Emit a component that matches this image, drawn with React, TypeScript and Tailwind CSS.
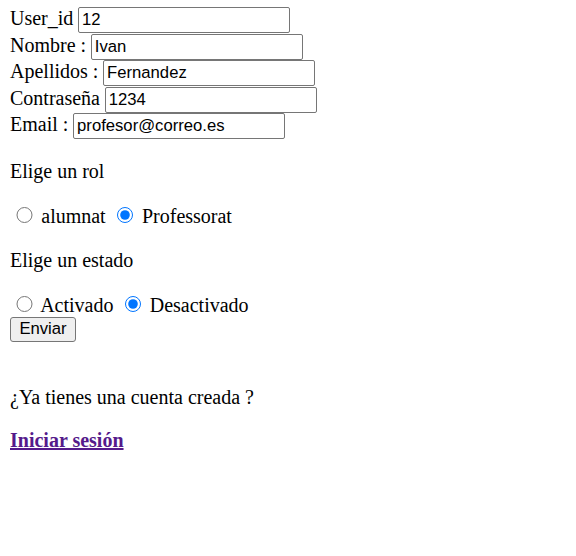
const fields = [
  { label: "User_id ", value: "12" },
  { label: "Nombre : ", value: "Ivan" },
  { label: "Apellidos : ", value: "Fernandez" },
  { label: "Contraseña ", value: "1234" },
  { label: "Email : ", value: "profesor@correo.es" },
];

const inputCls =
  "w-[212px] h-[26px] border border-[#767676] rounded-[2px] px-[2.75px] bg-white text-black text-[16.67px] font-['Liberation_Sans',Arial,sans-serif] outline-none";

const Radio = ({ name, checked }: { name: string; checked?: boolean }) => (
  <input
    type="radio"
    name={name}
    defaultChecked={checked}
    className="w-[16.25px] h-[16.25px] ml-[6.25px] mr-[3.75px] mt-[3.75px] mb-[4.75px] shrink-0"
  />
);

const App = () => {
  return (
    <div className="min-h-[556px] bg-white px-[10px] pt-[7px] text-black text-[20px] leading-[23px] font-['Liberation_Serif','Times_New_Roman',serif]">
      {/* Datos */}
      {fields.map((f) => (
        <div key={f.label} className="flex items-baseline h-[26.5px]">
          <span className="whitespace-pre">{f.label}</span>
          <input defaultValue={f.value} className={inputCls} />
        </div>
      ))}

      {/* Rol */}
      <p className="mt-[20.5px] mb-[20px]">Elige un rol</p>
      <div className="flex items-end mb-[21px]">
        <Radio name="rol" />
        <span className="whitespace-pre"> alumnat </span>
        <Radio name="rol" checked />
        <span className="whitespace-pre"> Professorat</span>
      </div>

      {/* Estado */}
      <p className="mb-[20px]">Elige un estado</p>
      <div className="flex items-end">
        <Radio name="estado" />
        <span className="whitespace-pre"> Activado </span>
        <Radio name="estado" checked />
        <span className="whitespace-pre"> Desactivado</span>
      </div>

      <button className="block mt-[0.5px] w-[66px] h-[25px] bg-[#efefef] border border-[#767676] rounded-[3px] text-black text-[16.67px] leading-none font-['Liberation_Sans',Arial,sans-serif]">
        Enviar
      </button>

      <p className="mt-[44.3px]">¿Ya tienes una cuenta creada ?</p>
      <p className="mt-[19.75px]">
        <a href="#" className="font-bold underline text-[#551a8b]">
          Iniciar sesión
        </a>
      </p>
    </div>
  );
};

export default App;
